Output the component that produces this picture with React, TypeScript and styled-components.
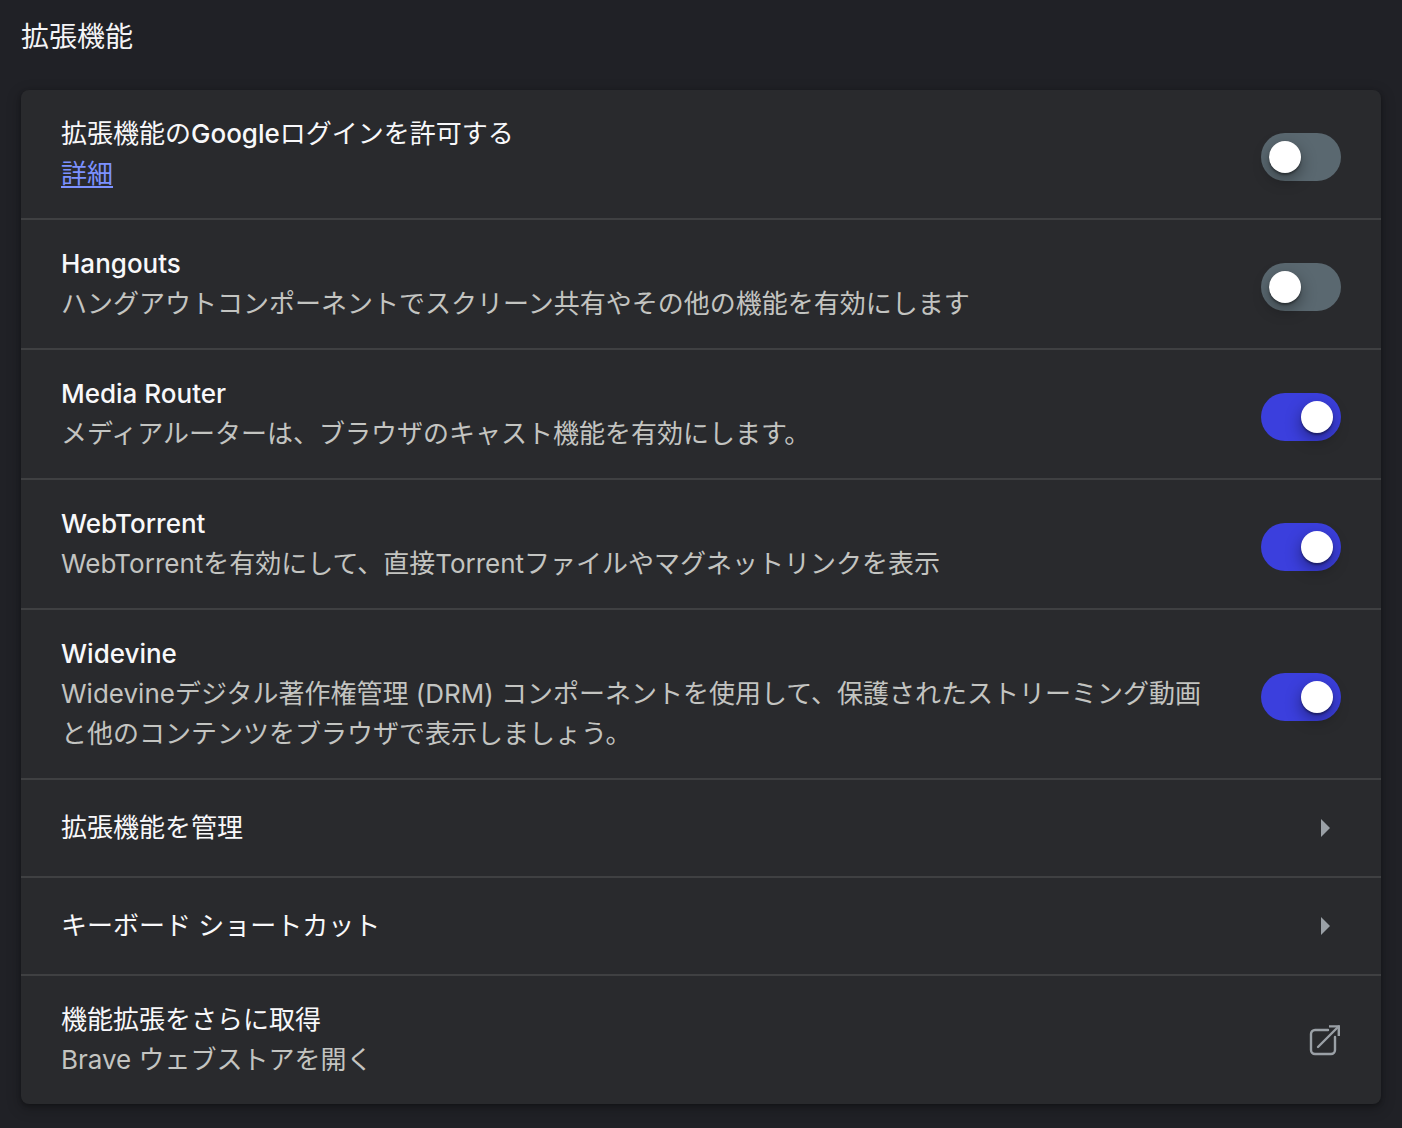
import React, { useId, useState } from "react";
import styled, { createGlobalStyle, css } from "styled-components";

const GlobalStyle = createGlobalStyle`
  *, *::before, *::after { box-sizing: border-box; }
  html { background: #202126; }
  body {
    margin: 0;
    background: #202126;
    color: #f4f4f6;
    font-family: Inter, "Noto Sans CJK JP", sans-serif;
    font-size: 26px;
    line-height: 40px;
  }
`;

const Page = styled.main`
  padding: 17px 21px 24px;
`;

const Heading = styled.h1`
  margin: 0 0 33px;
  font-size: 28px;
  font-weight: 400;
  line-height: 40px;
`;

const Card = styled.section`
  display: flex;
  flex-direction: column;
  border-radius: 8px;
  background: #292a2d;
  box-shadow: 0 2px 4px rgba(0, 0, 0, 0.3), 0 4px 12px 4px rgba(0, 0, 0, 0.15);
`;

const rowLayout = css`
  display: flex;
  align-items: center;
  justify-content: space-between;
  gap: 40px;
  width: 100%;
  padding: 24px 40px;

  &:not(:first-child) {
    border-top: 2px solid #3f4042;
  }
`;

const Row = styled.div`
  ${rowLayout}
`;

const NavRow = styled.button`
  ${rowLayout}
  height: 98px;
  border: 0;
  background: none;
  color: inherit;
  font: inherit;
  text-align: left;
  cursor: pointer;
`;

const StoreRow = styled.a`
  ${rowLayout}
  color: inherit;
  text-decoration: none;
`;

const Texts = styled.span`
  display: flex;
  flex: 1;
  flex-direction: column;
  min-width: 0;
`;

const Title = styled.span`
  color: #f8f8fa;
`;

const Description = styled.span`
  color: #c3c4c1;
`;

const Latin = styled.span`
  font-weight: 500;
`;

const DetailLink = styled.a`
  align-self: flex-start;
  color: #7c91ff;
  text-decoration: underline;
  text-decoration-thickness: 2px;
  text-underline-offset: 3px;
`;

const Switch = styled.input`
  appearance: none;
  flex: none;
  display: flex;
  align-items: center;
  width: 80px;
  height: 48px;
  margin: 6px 0 0;
  padding: 0 8px;
  border-radius: 24px;
  background: #5a6870;
  cursor: pointer;

  &::before {
    content: "";
    width: 32px;
    height: 32px;
    border-radius: 50%;
    background: #fff;
    box-shadow: 0 2px 2px rgba(0, 0, 0, 0.35), 0 6px 16px rgba(0, 0, 0, 0.4);
  }

  &:checked {
    justify-content: flex-end;
    background: #3b3fdd;
  }
`;

const Icon = styled.svg`
  flex: none;
  color: #9aa0a6;
`;

function ArrowIcon() {
  return (
    <Icon width="40" height="40" viewBox="0 0 40 40" aria-hidden="true">
      <path d="M20 11 29 20 20 29Z" fill="currentColor" />
    </Icon>
  );
}

function ExternalIcon() {
  return (
    <Icon
      width="32"
      height="32"
      viewBox="0 0 32 32"
      fill="none"
      stroke="currentColor"
      strokeWidth="2.4"
      aria-hidden="true"
    >
      <path d="M19 6H6a4 4 0 0 0-4 4v16a4 4 0 0 0 4 4h16a4 4 0 0 0 4-4V13" strokeLinecap="round" />
      <path d="M9 23 29.500 2.500" strokeLinecap="round" />
      <path d="M20 2.400H29.800V12" />
    </Icon>
  );
}

/* Latin words in titles are set one step heavier to balance the Japanese strokes. */
function TitleText({ text }: { text: string }) {
  return (
    <>
      {text
        .split(/([A-Za-z]+(?: [A-Za-z]+)*)/)
        .map((part, index) => (index % 2 ? <Latin key={index}>{part}</Latin> : part))}
    </>
  );
}

interface Setting {
  title: string;
  description?: string;
  link?: string;
  enabled: boolean;
}

const settings: Setting[] = [
  { title: "拡張機能のGoogleログインを許可する", link: "詳細", enabled: false },
  {
    title: "Hangouts",
    description: "ハングアウトコンポーネントでスクリーン共有やその他の機能を有効にします",
    enabled: false,
  },
  {
    title: "Media Router",
    description: "メディアルーターは、ブラウザのキャスト機能を有効にします。",
    enabled: true,
  },
  {
    title: "WebTorrent",
    description: "WebTorrentを有効にして、直接Torrentファイルやマグネットリンクを表示",
    enabled: true,
  },
  {
    title: "Widevine",
    description:
      "Widevineデジタル著作権管理 (DRM) コンポーネントを使用して、保護されたストリーミング動画と他のコンテンツをブラウザで表示しましょう。",
    enabled: true,
  },
];

function ToggleRow({ title, description, link, enabled }: Setting) {
  const id = useId();
  const [checked, setChecked] = useState(enabled);
  return (
    <Row>
      <Texts>
        <Title as="label" htmlFor={id}>
          <TitleText text={title} />
        </Title>
        {description && <Description>{description}</Description>}
        {link && <DetailLink href="#details">{link}</DetailLink>}
      </Texts>
      <Switch
        id={id}
        type="checkbox"
        role="switch"
        checked={checked}
        onChange={(event) => setChecked(event.target.checked)}
      />
    </Row>
  );
}

export default function App() {
  return (
    <>
      <GlobalStyle />
      <Page lang="ja">
        <Heading>拡張機能</Heading>
        <Card>
          {settings.map((setting) => (
            <ToggleRow key={setting.title} {...setting} />
          ))}
          {["拡張機能を管理", "キーボード ショートカット"].map((label) => (
            <NavRow key={label} type="button">
              <Title>{label}</Title>
              <ArrowIcon />
            </NavRow>
          ))}
          <StoreRow href="#store">
            <Texts>
              <Title>機能拡張をさらに取得</Title>
              <Description>Brave ウェブストアを開く</Description>
            </Texts>
            <ExternalIcon />
          </StoreRow>
        </Card>
      </Page>
    </>
  );
}
